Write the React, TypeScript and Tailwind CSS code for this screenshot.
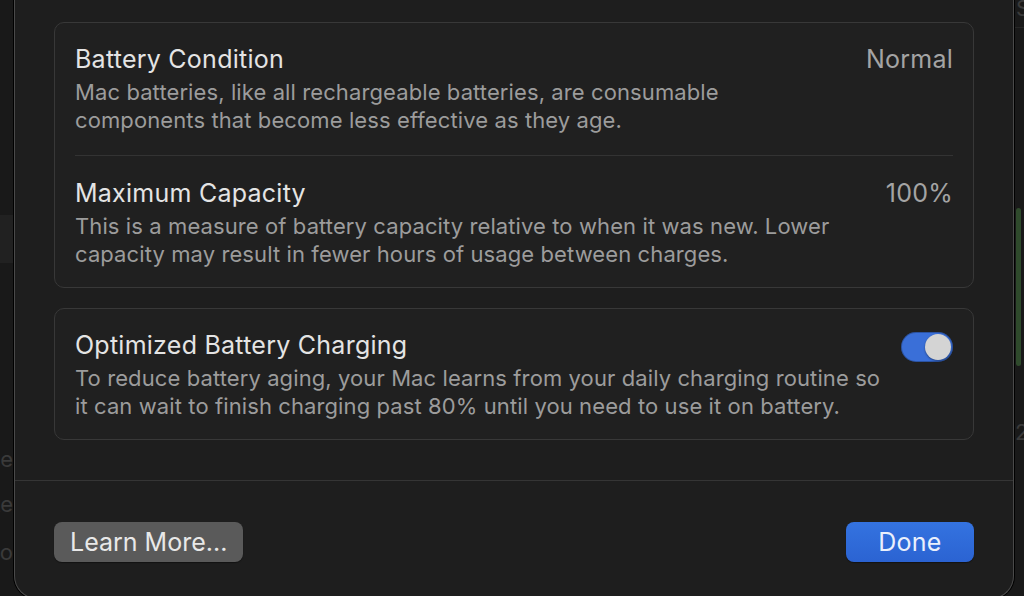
import React from "react";

const rows = [
  {
    title: "Battery Condition",
    value: "Normal",
    lines: [
      "Mac batteries, like all rechargeable batteries, are consumable",
      "components that become less effective as they age.",
    ],
    pad: "pt-[22px] pb-[21px]",
  },
  {
    title: "Maximum Capacity",
    value: "100%",
    lines: [
      "This is a measure of battery capacity relative to when it was new. Lower",
      "capacity may result in fewer hours of usage between charges.",
    ],
    pad: "pt-[23px] pb-[19px]",
  },
];

const Toggle: React.FC = () => (
  <div className="mt-[1px] flex h-[30px] w-[52px] shrink-0 items-center justify-end rounded-full bg-[#3a6fd8] px-[2px] shadow-[inset_0_0_0_1px_rgba(0,0,0,0.25)]">
    <div className="h-[26px] w-[26px] rounded-full bg-[#d4d4d4] shadow-[0_1px_2px_rgba(0,0,0,0.4)]" />
  </div>
);

const Lines: React.FC<{ lines: string[] }> = ({ lines }) => (
  <p className="mt-[5px] text-[22px] leading-[28px] tracking-[0.1px] text-[#9c9c9c]">
    {lines.map((l) => (
      <span key={l} className="block whitespace-nowrap">
        {l}
      </span>
    ))}
  </p>
);

const App: React.FC = () => {
  return (
    <div
      className="flex h-[596px] w-[1024px] overflow-hidden bg-[#191919] antialiased"
      style={{ fontFamily: "Inter, 'Noto Sans', sans-serif" }}
    >
      {/* window behind, left */}
      <div className="flex w-[13px] shrink-0 flex-col items-end overflow-hidden text-[22px] text-[#3a3a3a]">
        <div className="mt-[215px] h-[48px] w-full bg-[#212121]" />
        <div className="mt-[182px] whitespace-nowrap leading-[28px]">ge</div>
        <div className="mt-[17px] whitespace-nowrap leading-[28px]">te</div>
        <div className="mt-[20px] whitespace-nowrap leading-[28px]">o</div>
      </div>

      {/* sheet */}
      <div className="h-[600px] w-[1002px] shrink-0 rounded-b-[24px] border-x border-b border-black">
        <div className="flex h-full flex-col rounded-b-[23px] border-x border-b border-[#4a4a4a] bg-[#1e1e1e]">
          <div className="px-[39px] pt-[22px]">
            <div className="rounded-[10px] border border-[#383838] bg-[#202020] px-[20px]">
              {rows.map((row, i) => (
                <div
                  key={row.title}
                  className={`${row.pad} ${i > 0 ? "border-t border-[#333333]" : ""}`}
                >
                  <div className="flex items-center justify-between text-[25px] leading-[28px] tracking-[0.01em]">
                    <span className="text-[#e4e4e4]">{row.title}</span>
                    <span className="text-[#a4a4a4]">{row.value}</span>
                  </div>
                  <Lines lines={row.lines} />
                </div>
              ))}
            </div>

            <div className="mt-[20px] flex items-start justify-between gap-6 rounded-[10px] border border-[#383838] bg-[#202020] px-[20px] pt-[22px] pb-[19px]">
              <div className="min-w-0 flex-1">
                <div className="text-[25px] leading-[28px] tracking-[0.01em] text-[#e4e4e4]">
                  Optimized Battery Charging
                </div>
                <Lines
                  lines={[
                    "To reduce battery aging, your Mac learns from your daily charging routine so",
                    "it can wait to finish charging past 80% until you need to use it on battery.",
                  ]}
                />
              </div>
              <Toggle />
            </div>
          </div>

          <div className="mt-[40px] h-px bg-[#353535]" />

          <div className="flex items-center justify-between px-[39px] pt-[41px]">
            <button className="h-[40px] rounded-[8px] bg-[#5a5a5a] px-[16px] text-[25px] leading-[40px] text-[#e8e8e8] shadow-[0_1px_1px_rgba(0,0,0,0.4)]">
              Learn More...
            </button>
            <button className="h-[40px] w-[128px] rounded-[8px] bg-gradient-to-b from-[#3473e0] to-[#2b63d2] text-[25px] leading-[40px] tracking-[0.01em] text-[#eaf0fc] shadow-[0_1px_1px_rgba(0,0,0,0.4)]">
              Done
            </button>
          </div>
        </div>
      </div>

      {/* window behind, right */}
      <div className="flex w-[9px] shrink-0 flex-col overflow-hidden text-[22px] text-[#3a3a3a]">
        <div className="-mt-[6px] h-[34px] whitespace-nowrap border-b border-[#262626] pl-[1px] leading-[28px]">
          S
        </div>
        <div className="mt-[180px] ml-[1px] h-[158px] w-[5px] rounded-full bg-[#2f4a2c]" />
        <div className="mt-[52px] whitespace-nowrap leading-[28px]">2</div>
      </div>
    </div>
  );
};

export default App;
